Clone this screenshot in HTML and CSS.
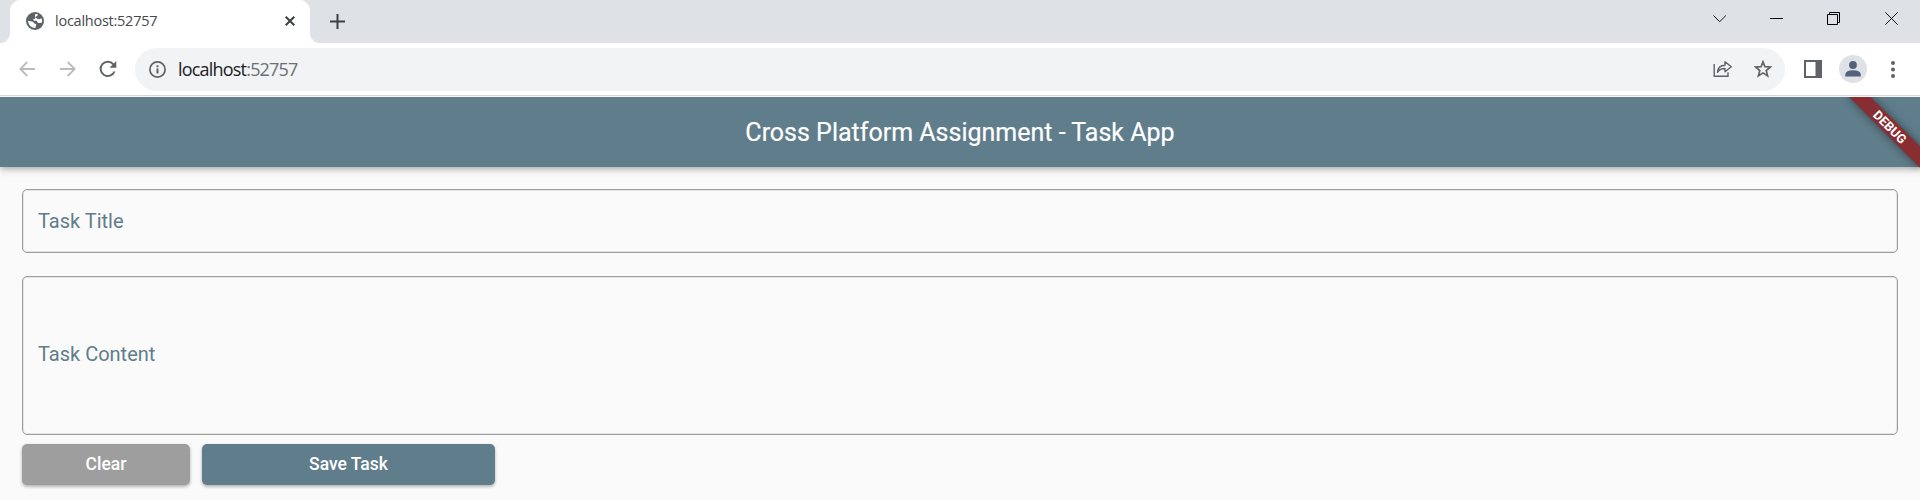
FILE: index.html
```html
<!DOCTYPE html>
<html lang="en">
<head>
<meta charset="utf-8">
<title>localhost:52757</title>
<link rel="stylesheet" href="styles.css">
</head>
<body>
<div class="tabstrip">
  <div class="tab">
    <svg class="globe" width="18" height="18" viewBox="0 0 18 18"><circle cx="9" cy="9" r="9" fill="#5f6368"/><path d="M1.900 8.700 5.900 9.400Q7.700 9.700 8 11.200L10.300 12.300 9.400 16Q2.800 15.600 1.900 8.700ZM9.200 2H11.700L11.500 3.800 9.300 5 9 6.700 7.100 7.200 8 8.700 10.600 8.800 12 10.900 15.800 10.700Q16.500 8.500 15.500 6.200L13.500 7.200 11.200 6.800 9 5Z" fill="#fff"/></svg>
    <span class="tab-title">localhost:52757</span>
    <svg class="tab-close" width="10" height="10" viewBox="0 0 10 10"><path d="M.7.7 9.300 9.300M9.300.7.7 9.300" stroke="#3c4043" stroke-width="2"/></svg>
  </div>
  <svg class="new-tab" width="15" height="15" viewBox="0 0 15 15"><path d="M7.500 0V15M0 7.500H15" stroke="#3c4043" stroke-width="2"/></svg>
  <svg class="window-controls" width="186" height="14" viewBox="0 0 186 14" fill="none" stroke="#111" stroke-width="1"><path d="M.5 3.500 6.700 9.700 12.900 3.500"/><path d="M57 6.500H70" stroke="#000"/><path d="M114.500 2.500H124.500V12.500H114.500ZM116.500 2.500V.5H126.500V10.500H124.500" stroke="#000"/><path d="M172.300.3 184.700 12.700M184.700.3 172.300 12.700"/></svg>
</div>
<div class="toolbar">
  <svg class="nav-icon back" width="16" height="16" viewBox="0 0 16 16"><path d="M16 8H1.500M8.300 1 1.300 8 8.300 15" fill="none" stroke="#babcbe" stroke-width="1.800"/></svg>
  <svg class="nav-icon forward" width="16" height="16" viewBox="0 0 16 16"><path d="M0 8H14.500M7.700 1 14.700 8 7.700 15" fill="none" stroke="#babcbe" stroke-width="1.800"/></svg>
  <svg class="nav-icon reload" width="18" height="18" viewBox="0 0 18 18"><path d="M14.400 4.300A7.200 7.200 0 1 0 15.500 11.500" fill="none" stroke="#5f6368" stroke-width="2"/><path d="M17.300 1V7.800H10.500Z" fill="#5f6368"/></svg>
  <div class="omnibox">
    <svg width="17" height="17" viewBox="0 0 17 17"><circle cx="8.500" cy="8.500" r="7.600" fill="none" stroke="#5f6368" stroke-width="1.700"/><path d="M7.500 7.500H9.500V12.500H7.500ZM7.500 4.300H9.500V6.200H7.500Z" fill="#5f6368"/></svg>
    <span class="url">localhost<span class="port">:52757</span></span>
    <svg class="share" width="20" height="18" viewBox="0 0 20 18" fill="none" stroke="#5f6368" stroke-width="1.400"><path d="M1.200 4V16.300H15V12.300"/><path d="M4.500 12.300Q5 5.500 12 5.300V1.700L18.300 6.800 12 11.800V8.500Q7 8.500 4.500 12.300Z" stroke-linejoin="round"/></svg>
    <svg class="star" width="18" height="18" viewBox="0 0 18 18"><path d="M9 1.800 10.900 6.700 16.400 7 12.200 10.500 13.600 15.900 9 12.900 4.400 15.900 5.800 10.500 1.600 7 7.100 6.700Z" fill="none" stroke="#5f6368" stroke-width="1.700"/></svg>
  </div>
  <svg class="panel" width="18" height="18" viewBox="0 0 18 18"><path d="M0 0H18V18H0ZM2 2V16H11.500V2Z" fill="#5f6368" fill-rule="evenodd"/></svg>
  <svg class="avatar" width="28" height="28" viewBox="0 0 28 28"><circle cx="14" cy="14" r="14" fill="#dee1e6"/><circle cx="14" cy="10" r="3.900" fill="#54617a"/><path d="M6.300 21.500V19Q7 15.500 14 15.200 21 15.500 21.800 19V21.500Z" fill="#54617a"/></svg>
  <svg class="menu" width="4" height="17" viewBox="0 0 4 17" fill="#5f6368"><circle cx="2" cy="2" r="2"/><circle cx="2" cy="8.500" r="2"/><circle cx="2" cy="15" r="2"/></svg>
</div>
<main class="app">
  <header class="app-bar"><h1 class="app-title">Cross Platform Assignment - Task App</h1></header>
  <div class="debug-corner"><div class="debug-banner">DEBUG</div></div>
  <form class="task-form">
    <div class="field field-title"><span>Task Title</span></div>
    <div class="field field-content"><span>Task Content</span></div>
    <div class="actions">
      <button type="button" class="btn btn-clear">Clear</button>
      <button type="button" class="btn btn-save">Save Task</button>
    </div>
  </form>
</main>
</body>
</html>
```

FILE: styles.css
```css
* { box-sizing: border-box; }
body { margin: 0; height: 500px; overflow: hidden; background: #fafafa; font-family: Roboto, sans-serif; }
svg { display: block; flex: none; }
.tabstrip { height: 43px; background: #dee1e6; display: flex; align-items: flex-start; padding-left: 10px; }
.tab { position: relative; width: 300px; height: 43px; flex: none; background: #fff; border-radius: 10px 10px 0 0; display: flex; align-items: center; padding: 0 15px 1px 16px; }
.tab::before, .tab::after { content: ""; position: absolute; bottom: 0; width: 10px; height: 10px; }
.tab::before { left: -10px; background: radial-gradient(circle at 0 0, #dee1e6 9.500px, #fff 10.500px); }
.tab::after { right: -10px; background: radial-gradient(circle at 100% 0, #dee1e6 9.500px, #fff 10.500px); }
.tab-title { margin-left: 11px; font: 14.500px/20px "Open Sans", sans-serif; letter-spacing: -.25px; color: #45494d; }
.tab-close { margin-left: auto; }
.new-tab { margin: 14px 0 0 20px; }
.window-controls { margin: 12px 21px 0 auto; }
.toolbar { position: relative; z-index: 2; height: 54px; background: #fff; border-bottom: 1px solid #f5f6f7; box-shadow: inset 0 -1px #d5d6d9; display: flex; align-items: center; padding: 0 25px 1px 19px; }
.forward { margin-left: 25px; }
.reload { margin-left: 23px; }
.omnibox { height: 43px; margin-left: 18px; flex: 1; background: #f1f3f4; border-radius: 22px; display: flex; align-items: center; padding: 0 13px 0 14px; }
.url { margin-left: 12px; font: 18px/24px "Open Sans", sans-serif; letter-spacing: -.8px; color: #202124; }
.port { color: #6b6f74; }
.share { margin-left: auto; }
.star { margin-left: 21px; }
.panel { margin-left: 19px; }
.avatar { margin-left: 17px; }
.menu { margin-left: 24px; }
.app { position: relative; height: 403px; }
.app-bar { height: 70px; background: #607d8b; display: flex; align-items: center; justify-content: center; box-shadow: 0 2px 5px -1px rgba(0,0,0,.2), 0 5px 6px rgba(0,0,0,.08), 0 1px 10px rgba(0,0,0,.1); }
.app-title { margin: 1px 0 0; font-size: 25px; font-weight: 400; line-height: 30px; color: #fff; -webkit-text-stroke: .2px #fff; }
.debug-corner { position: absolute; top: 0; right: 0; width: 0; height: 0; transform: rotate(45deg); }
.debug-banner { position: absolute; left: -50px; top: 35px; width: 100px; height: 15px; background: #882e32; box-shadow: 0 0 8px rgba(0,0,0,.5); color: #fff; text-align: center; font-size: 12.750px; font-weight: 700; line-height: 15px; }
.task-form { padding: 22px; }
.field { border: 1px solid #9d9d9d; border-radius: 5px; box-shadow: inset 0 0 0 1px #e4e4e4; display: flex; align-items: center; padding-left: 15px; font-size: 20px; color: #607d8b; }
.field-title { height: 64px; padding-bottom: 1px; }
.field-content { height: 159px; margin-top: 22.500px; padding-bottom: 2px; }
.actions { display: flex; gap: 12px; margin-top: 9.500px; }
.btn { height: 40.500px; border: 0; border-radius: 5px; padding: 0; color: #fff; font: 500 17.500px/24px Roboto, sans-serif; box-shadow: 0 2px 3px rgba(0,0,0,.2), 0 1px 4px rgba(0,0,0,.12); }
.btn-clear { width: 168px; background: #9e9e9e; }
.btn-save { width: 293px; background: #607d8b; }
```
